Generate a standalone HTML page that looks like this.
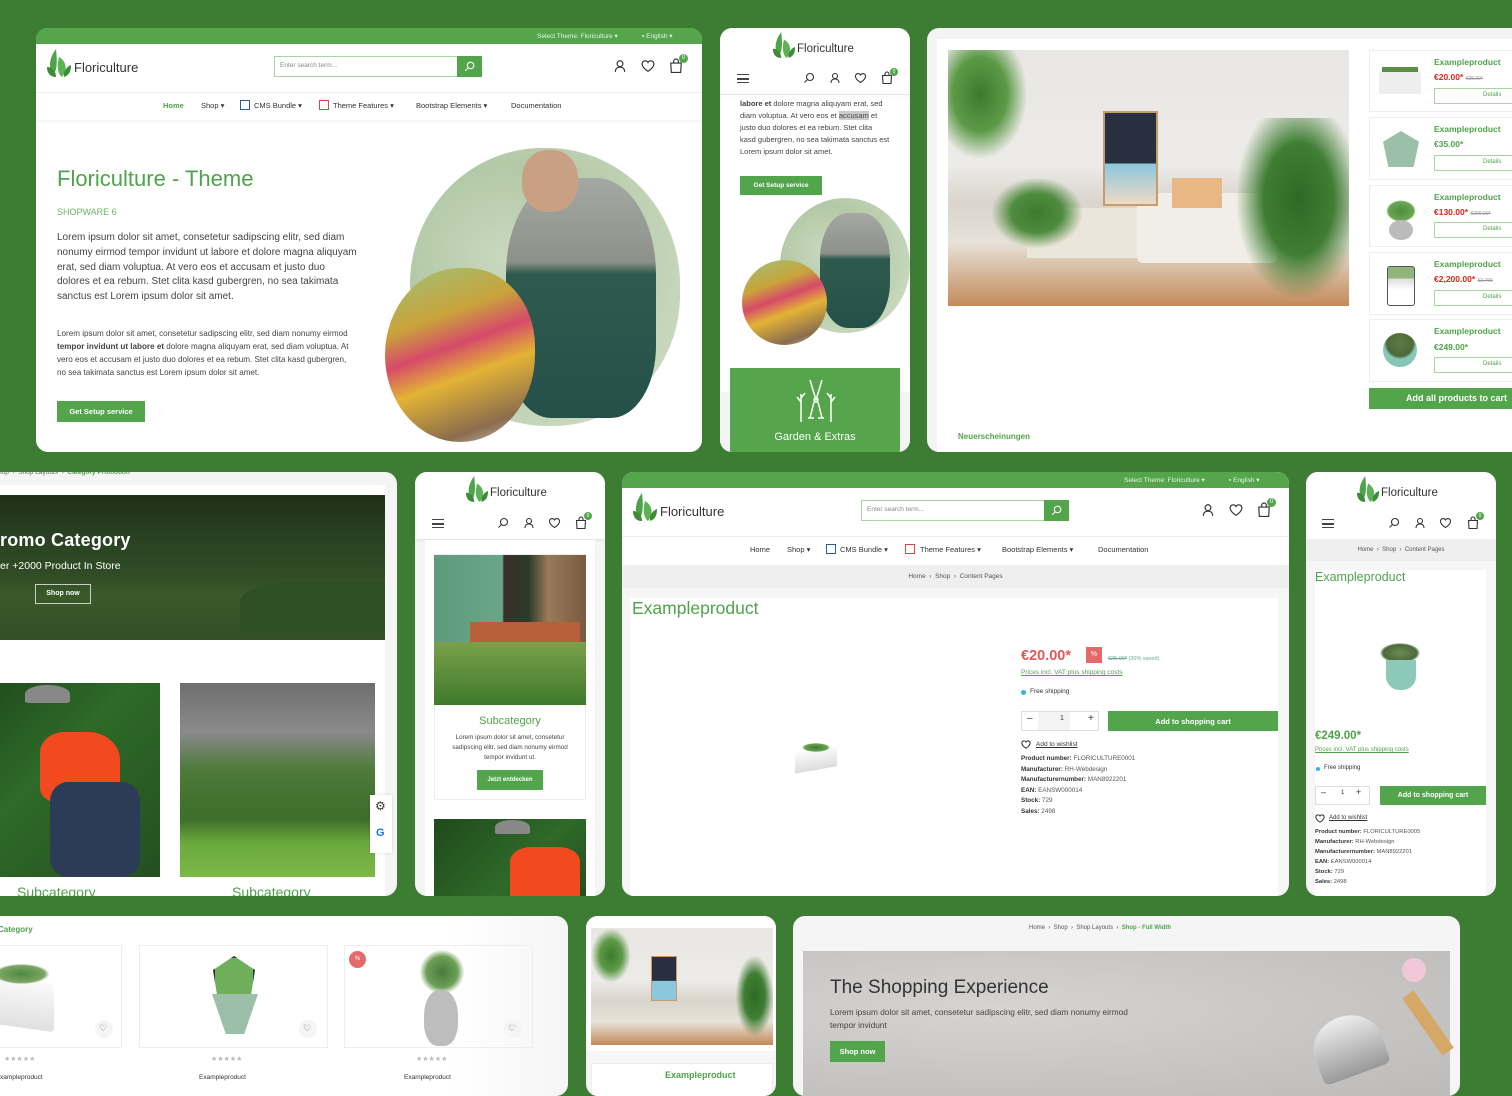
<!DOCTYPE html>
<html><head><meta charset="utf-8">
<style>
*{margin:0;padding:0;box-sizing:border-box}
body{width:1512px;height:1080px;overflow:hidden;background:#3c7d33;font-family:"Liberation Sans",sans-serif;color:#333;position:relative}
.p{position:absolute;background:#fff;border-radius:12px;overflow:hidden}
.a{position:absolute;white-space:nowrap}
.g{color:#4fa34a}
.btn{position:absolute;background:#52a54a;color:#fff;font-weight:bold;display:flex;align-items:center;justify-content:center;white-space:nowrap}
.ic{position:absolute}
.bc{position:absolute;background:#f2f2f2;left:0;right:0;text-align:center;color:#555}
.img{position:absolute}
</style></head><body>

<!-- ============ PANEL A ============ -->
<div class="p" style="left:36px;top:28px;width:666px;height:424px;">
  <div style="position:absolute;left:0;top:0;width:666px;height:16px;background:#55a54c"></div>
  <div class="a" style="left:501px;top:4px;font-size:6.5px;color:#e8f4e6">Select Theme: Floriculture ▾</div>
  <div class="a" style="left:606px;top:4px;font-size:6.5px;color:#e8f4e6">▪ English ▾</div>
  <svg class="ic" style="left:10px;top:21px" width="26" height="29" viewBox="0 0 26 29"><path d="M10 0 C4 8 2 16 6 26 C10 24 12 18 10 0Z" fill="#4fa34a"/><path d="M13 8 C20 12 22 20 16 28 C11 24 11 16 13 8Z" fill="#5cb356"/><path d="M1 18 C6 18 10 22 10 28 C4 28 1 24 1 18Z" fill="#3d8c37"/><path d="M25 16 C20 18 17 23 18 28 C24 26 25 21 25 16Z" fill="#3d8c37"/></svg>
  <div class="a" style="left:38px;top:32px;font-size:13px;color:#333">Floriculture</div>
  <div style="position:absolute;left:238px;top:28px;width:208px;height:21px;border:1px solid #a8d6a2;background:#fff"></div>
  <div class="a" style="left:244px;top:34px;font-size:6.5px;color:#888">Enter search term...</div>
  <div style="position:absolute;left:421px;top:28px;width:25px;height:21px;background:#52a54a"></div>
  <svg class="ic" style="left:427px;top:32px" width="13" height="13" viewBox="0 0 24 24" fill="none" stroke="#fff" stroke-width="2"><circle cx="14" cy="10" r="6"/><path d="M10 14 4 20"/></svg>
  <svg class="ic" style="left:577px;top:31px" width="14" height="14" viewBox="0 0 24 24" fill="none" stroke="#333" stroke-width="2"><circle cx="12" cy="8" r="5"/><path d="M4 22c0-5 3-8 8-8s8 3 8 8"/></svg>
  <svg class="ic" style="left:605px;top:31px" width="14" height="14" viewBox="0 0 24 24" fill="none" stroke="#333" stroke-width="2"><path d="M12 21s-8-5-9.5-10A5 5 0 0 1 12 6a5 5 0 0 1 9.5 5C20 16 12 21 12 21z"/></svg>
  <svg class="ic" style="left:633px;top:30px" width="14" height="16" viewBox="0 0 24 26" fill="none" stroke="#333" stroke-width="2"><path d="M3 8h18l-1 16H4z"/><path d="M8 8V5a4 4 0 0 1 8 0v3"/></svg>
  <div style="position:absolute;left:643px;top:26px;width:9px;height:9px;border-radius:50%;background:#52a54a;color:#fff;font-size:6px;text-align:center;line-height:9px">0</div>
  <div style="position:absolute;left:0;top:64px;width:666px;height:28px;border-top:1px solid #eee;box-shadow:0 2px 3px rgba(0,0,0,.05)"></div>
  <div class="a" style="left:127px;top:73px;font-size:7.5px;font-weight:bold;color:#4fa34a">Home</div>
  <div class="a" style="left:165px;top:73px;font-size:7.5px">Shop ▾</div>
  <div style="position:absolute;left:204px;top:72px;width:10px;height:10px;border:1.5px solid #2e5d9c"></div>
  <div class="a" style="left:218px;top:73px;font-size:7.5px">CMS Bundle ▾</div>
  <div style="position:absolute;left:283px;top:72px;width:10px;height:10px;border:1.5px solid #d94848"></div>
  <div class="a" style="left:297px;top:73px;font-size:7.5px">Theme Features ▾</div>
  <div class="a" style="left:380px;top:73px;font-size:7.5px">Bootstrap Elements ▾</div>
  <div class="a" style="left:475px;top:73px;font-size:7.5px">Documentation</div>
  <div class="a g" style="left:21px;top:138px;font-size:22px">Floriculture - Theme</div>
  <div class="a" style="left:21px;top:179px;font-size:9px;color:#6ab564">SHOPWARE 6</div>
  <div style="position:absolute;left:21px;top:203px;width:300px;font-size:10px;line-height:14.8px;color:#444">Lorem ipsum dolor sit amet, consetetur sadipscing elitr, sed diam nonumy eirmod tempor invidunt ut labore et dolore magna aliquyam erat, sed diam voluptua. At vero eos et accusam et justo duo dolores et ea rebum. Stet clita kasd gubergren, no sea takimata sanctus est Lorem ipsum dolor sit amet.</div>
  <div style="position:absolute;left:21px;top:300px;width:300px;font-size:8.1px;line-height:12.9px;color:#444">Lorem ipsum dolor sit amet, consetetur sadipscing elitr, sed diam nonumy eirmod <b>tempor invidunt ut labore et</b> dolore magna aliquyam erat, sed diam voluptua. At vero eos et accusam et justo duo dolores et ea rebum. Stet clita kasd gubergren, no sea takimata sanctus est Lorem ipsum dolor sit amet.</div>
  <div class="btn" style="left:21px;top:373px;width:88px;height:21px;font-size:7.5px">Get Setup service</div>
  <div style="position:absolute;left:374px;top:120px;width:270px;height:278px;border-radius:50% 50% 48% 52%;background:radial-gradient(ellipse at 35% 40%,#c9d8bf 0,#b3c9a6 40%,#d6e2ce 100%)"></div>
  <div style="position:absolute;left:470px;top:150px;width:150px;height:240px;border-radius:40% 40% 30% 30%;background:linear-gradient(180deg,#a5a8a2 0,#8d918a 35%,#2e5a4e 40%,#24504a 100%)"></div>
  <div style="position:absolute;left:486px;top:122px;width:56px;height:62px;border-radius:45%;background:#c9a083"></div>
  <div style="position:absolute;left:349px;top:240px;width:150px;height:174px;border-radius:50% 45% 50% 50%;background:linear-gradient(160deg,#9cc27a 0,#c9a33a 30%,#d64a6a 45%,#e3b334 60%,#8b6d4d 85%,#cfc8c0 100%)"></div>
</div>

<!-- ============ PANEL B ============ -->
<div class="p" style="left:720px;top:28px;width:190px;height:424px;">
  <svg class="ic" style="left:52px;top:4px" width="24" height="27" viewBox="0 0 26 29"><path d="M10 0 C4 8 2 16 6 26 C10 24 12 18 10 0Z" fill="#4fa34a"/><path d="M13 8 C20 12 22 20 16 28 C11 24 11 16 13 8Z" fill="#5cb356"/><path d="M1 18 C6 18 10 22 10 28 C4 28 1 24 1 18Z" fill="#3d8c37"/><path d="M25 16 C20 18 17 23 18 28 C24 26 25 21 25 16Z" fill="#3d8c37"/></svg>
  <div class="a" style="left:77px;top:15px;font-size:11.5px">Floriculture</div>
  <div style="position:absolute;left:17px;top:46px;width:12px;height:9px;border-top:1.5px solid #444;border-bottom:1.5px solid #444"></div><div style="position:absolute;left:17px;top:50px;width:12px;height:1.5px;background:#444"></div>
  <svg class="ic" style="left:83px;top:44px" width="12" height="12" viewBox="0 0 24 24" fill="none" stroke="#333" stroke-width="2.2"><circle cx="14" cy="10" r="7"/><path d="M9 15 3 21"/></svg>
  <svg class="ic" style="left:109px;top:44px" width="12" height="12" viewBox="0 0 24 24" fill="none" stroke="#333" stroke-width="2.2"><circle cx="12" cy="8" r="5"/><path d="M4 22c0-5 3-8 8-8s8 3 8 8"/></svg>
  <svg class="ic" style="left:134px;top:44px" width="13" height="12" viewBox="0 0 24 24" fill="none" stroke="#333" stroke-width="2.2"><path d="M12 21s-8-5-9.5-10A5 5 0 0 1 12 6a5 5 0 0 1 9.5 5C20 16 12 21 12 21z"/></svg>
  <svg class="ic" style="left:161px;top:43px" width="12" height="14" viewBox="0 0 24 26" fill="none" stroke="#333" stroke-width="2.2"><path d="M3 8h18l-1 16H4z"/><path d="M8 8V5a4 4 0 0 1 8 0v3"/></svg>
  <div style="position:absolute;left:170px;top:40px;width:8px;height:8px;border-radius:50%;background:#52a54a;color:#fff;font-size:5px;text-align:center;line-height:8px">0</div>
  <div style="position:absolute;left:0;top:66px;width:190px;height:1px;background:#e6e6e6;box-shadow:0 1px 3px rgba(0,0,0,.08)"></div>
  <div style="position:absolute;left:20px;top:70px;width:150px;font-size:7.5px;line-height:11.9px;color:#444"><b>labore et</b> dolore magna aliquyam erat, sed diam voluptua. At vero eos et <span style="background:#ccc">accusam</span> et justo duo dolores et ea rebum. Stet clita kasd gubergren, no sea takimata sanctus est Lorem ipsum dolor sit amet.</div>
  <div class="btn" style="left:20px;top:148px;width:82px;height:19px;font-size:6.5px">Get Setup service</div>
  <div style="position:absolute;left:60px;top:170px;width:130px;height:135px;border-radius:50%;background:radial-gradient(ellipse at 35% 40%,#c9d8bf 0,#b3c9a6 40%,#d6e2ce 100%)"></div>
  <div style="position:absolute;left:100px;top:185px;width:70px;height:115px;border-radius:40%;background:linear-gradient(180deg,#a5a8a2 0,#8d918a 35%,#2e5a4e 40%,#24504a 100%)"></div>
  <div style="position:absolute;left:22px;top:232px;width:85px;height:85px;border-radius:50%;background:linear-gradient(160deg,#9cc27a 0,#c9a33a 30%,#d64a6a 45%,#e3b334 60%,#8b6d4d 85%,#cfc8c0 100%)"></div>
  <div style="position:absolute;left:0;top:364px;width:190px;height:60px;background:#f4f4f4"></div>
  <div style="position:absolute;left:10px;top:340px;width:170px;height:84px;background:#54a54b"></div>
  <svg class="ic" style="left:76px;top:350px" width="40" height="46" viewBox="0 0 40 46" fill="none" stroke="#fff" stroke-width="1.5"><path d="M14 2 20 22 26 2"/><circle cx="20" cy="22" r="2"/><path d="M18 24 14 40M22 24 26 40M12 40h6M22 40h6"/><path d="M5 44V16M5 24l-4-5M5 20l4-5M35 44V16M35 24l4-5M35 20l-4-5"/></svg>
  <div class="a" style="left:0;width:190px;text-align:center;top:403px;font-size:11px;color:#fff">Garden &amp; Extras</div>
</div>

<!-- ============ PANEL C ============ -->
<div class="p" style="left:927px;top:28px;width:600px;height:424px;background:#f4f4f4">
  <div style="position:absolute;left:10px;top:11px;width:600px;height:413px;background:#fff"></div>
  <div class="img" style="left:21px;top:22px;width:401px;height:256px;background:linear-gradient(180deg,#e9e7e3 0,#ecebe8 45%,#d9d4cc 60%,#e7e2d9 75%,#c48a5a 100%)"></div>
  <div class="img" style="left:21px;top:22px;width:80px;height:110px;background:radial-gradient(ellipse at 40% 40%,#3d7a2c 0,#5d9a48 40%,transparent 70%)"></div>
  <div class="img" style="left:100px;top:180px;width:150px;height:50px;background:#ebe5da"></div>
  <div class="img" style="left:210px;top:165px;width:140px;height:70px;background:#f1eee8;border-radius:6px"></div>
  <div class="img" style="left:245px;top:150px;width:50px;height:30px;background:#e8b784"></div>
  <div class="img" style="left:176px;top:83px;width:55px;height:95px;background:linear-gradient(#283040 0,#283040 55%,#8bc7dd 56%,#f0d9c6 100%);border:2px solid #c79b6c"></div>
  <div class="img" style="left:310px;top:90px;width:112px;height:180px;background:radial-gradient(ellipse at 55% 45%,#2e6a25 0,#3f7e33 40%,transparent 72%)"></div>
  <div class="img" style="left:65px;top:150px;width:90px;height:70px;background:radial-gradient(ellipse,#3c7a30 0,#4f8c3f 40%,transparent 72%)"></div>
  <div class="a" style="left:31px;top:404px;font-size:8px;font-weight:bold;color:#52a54a">Neuerscheinungen</div>
  <div style="position:absolute;left:442px;top:22px;width:160px;height:62px;background:#fff;border:1px solid #eee"></div>
  <div style="position:absolute;left:442px;top:89px;width:160px;height:63px;background:#fff;border:1px solid #eee"></div>
  <div style="position:absolute;left:442px;top:157px;width:160px;height:62px;background:#fff;border:1px solid #eee"></div>
  <div style="position:absolute;left:442px;top:224px;width:160px;height:63px;background:#fff;border:1px solid #eee"></div>
  <div style="position:absolute;left:442px;top:291px;width:160px;height:63px;background:#fff;border:1px solid #eee"></div>
  <div class="img" style="left:452px;top:44px;width:42px;height:22px;background:#eee;box-shadow:0 -8px 0 -3px #5a8f45"></div>
  <div class="img" style="left:456px;top:103px;width:36px;height:36px;background:#9bbfa8;clip-path:polygon(50% 0,100% 30%,85% 100%,15% 100%,0 30%)"></div>
  <div class="img" style="left:459px;top:172px;width:30px;height:22px;background:radial-gradient(#4f8d3d,#6aa552 60%,transparent 70%)"></div><div class="img" style="left:462px;top:192px;width:24px;height:20px;border-radius:50%;background:#bbb"></div>
  <div class="img" style="left:460px;top:238px;width:28px;height:40px;border:1px solid #555;border-radius:3px;background:linear-gradient(#8fb57a 0,#8fb57a 30%,#ddd 31%,#fff 60%)"></div>
  <div class="img" style="left:456px;top:305px;width:34px;height:34px;border-radius:50%;background:radial-gradient(circle at 50% 30%,#5c7a45 0,#4e6a3b 45%,#8bc8b8 55%,#7cc1b0 100%)"></div>
  <div class="a" style="left:507px;top:29px;font-size:8.5px;font-weight:bold;color:#4fa34a">Exampleproduct</div>
  <div class="a" style="left:507px;top:44px;font-size:8.5px;font-weight:bold;color:#e2231a">€20.00* <span style="font-size:5px;color:#999;text-decoration:line-through;font-weight:normal">€25.00*</span></div>
  <div class="a" style="left:507px;top:96px;font-size:8.5px;font-weight:bold;color:#4fa34a">Exampleproduct</div>
  <div class="a" style="left:507px;top:111px;font-size:8.5px;font-weight:bold;color:#4fa34a">€35.00*</div>
  <div class="a" style="left:507px;top:164px;font-size:8.5px;font-weight:bold;color:#4fa34a">Exampleproduct</div>
  <div class="a" style="left:507px;top:179px;font-size:8.5px;font-weight:bold;color:#e2231a">€130.00* <span style="font-size:5px;color:#999;text-decoration:line-through;font-weight:normal">€200.00*</span></div>
  <div class="a" style="left:507px;top:231px;font-size:8.5px;font-weight:bold;color:#4fa34a">Exampleproduct</div>
  <div class="a" style="left:507px;top:246px;font-size:8.5px;font-weight:bold;color:#e2231a">€2,200.00* <span style="font-size:5px;color:#999;text-decoration:line-through;font-weight:normal">€2,799</span></div>
  <div class="a" style="left:507px;top:298px;font-size:8.5px;font-weight:bold;color:#4fa34a">Exampleproduct</div>
  <div class="a" style="left:507px;top:314px;font-size:8.5px;font-weight:bold;color:#4fa34a">€249.00*</div>
  <div style="position:absolute;left:507px;top:60px;width:95px;height:16px;border:1px solid #a8d6a2"></div><div class="a" style="left:556px;top:64px;font-size:6px;color:#4fa34a">Details</div>
  <div style="position:absolute;left:507px;top:127px;width:95px;height:16px;border:1px solid #a8d6a2"></div><div class="a" style="left:556px;top:131px;font-size:6px;color:#4fa34a">Details</div>
  <div style="position:absolute;left:507px;top:194px;width:95px;height:16px;border:1px solid #a8d6a2"></div><div class="a" style="left:556px;top:198px;font-size:6px;color:#4fa34a">Details</div>
  <div style="position:absolute;left:507px;top:262px;width:95px;height:16px;border:1px solid #a8d6a2"></div><div class="a" style="left:556px;top:266px;font-size:6px;color:#4fa34a">Details</div>
  <div style="position:absolute;left:507px;top:329px;width:95px;height:16px;border:1px solid #a8d6a2"></div><div class="a" style="left:556px;top:333px;font-size:6px;color:#4fa34a">Details</div>
  <div style="position:absolute;left:442px;top:360px;width:160px;height:21px;background:#52a54a"></div>
  <div class="a" style="left:479px;top:365px;font-size:9px;font-weight:bold;color:#fff">Add all products to cart</div>
</div>

<!-- ============ PANEL D ============ -->
<div class="p" style="left:-20px;top:472px;width:417px;height:424px;background:#f5f5f5">
  <div class="a" style="left:18px;top:-3px;font-size:6.5px;color:#666">hop &nbsp;›&nbsp; Shop Layouts &nbsp;›&nbsp; <b style="color:#4fa34a">Category Promotion</b></div>
  <div style="position:absolute;left:0;top:13px;width:405px;height:411px;background:#fff"></div>
  <div class="img" style="left:0;top:23px;width:405px;height:145px;background:linear-gradient(180deg,#1f2f18 0,#2b4424 35%,#304c25 55%,#3a5a2a 70%,#324f25 100%)"></div>
  <div class="img" style="left:260px;top:110px;width:145px;height:50px;background:#2f4f24;border-radius:40% 0 0 0"></div>
  <div class="a" style="left:20px;top:58px;font-size:18px;color:#fff;font-weight:bold;letter-spacing:.2px">romo Category</div>
  <div class="a" style="left:20px;top:88px;font-size:10.5px;color:#fff">er +2000 Product In Store</div>
  <div style="position:absolute;left:55px;top:112px;width:56px;height:20px;border:1px solid #ccc;color:#fff;font-size:7px;font-weight:bold;text-align:center;line-height:18px">Shop now</div>
  <div class="img" style="left:0;top:211px;width:180px;height:194px;background:linear-gradient(135deg,#1f4a1c 0,#2e6a28 40%,#244f20 100%)"></div>
  <div class="img" style="left:60px;top:260px;width:80px;height:70px;background:#f04a1e;border-radius:30% 40% 20% 20%"></div>
  <div class="img" style="left:45px;top:213px;width:45px;height:18px;background:#888;border-radius:50% 50% 10% 10%"></div>
  <div class="img" style="left:70px;top:310px;width:90px;height:95px;background:#2c3c56;border-radius:20%"></div>
  <div class="img" style="left:200px;top:211px;width:195px;height:194px;background:linear-gradient(180deg,#6e6e6e 0,#8a8a8a 25%,#4e7a3a 45%,#3d6e2a 70%,#6aa83d 82%,#7db848 100%)"></div>
  <div class="a g" style="left:37px;top:412px;font-size:14px">Subcategory</div>
  <div class="a g" style="left:252px;top:412px;font-size:14px">Subcategory</div>
  <div style="position:absolute;left:390px;top:323px;width:22px;height:58px;background:#fff;box-shadow:0 0 3px rgba(0,0,0,.15)"></div>
  <div class="a" style="left:395px;top:327px;font-size:12px;color:#333">⚙</div>
  <div class="a" style="left:396px;top:355px;font-size:11px;color:#1a73e8;font-weight:bold">G</div>
</div>

<!-- ============ PANEL E ============ -->
<div class="p" style="left:415px;top:472px;width:190px;height:424px;background:#f5f5f5">
  <div style="position:absolute;left:0;top:0;width:190px;height:67px;background:#fff;box-shadow:0 1px 3px rgba(0,0,0,.1)"></div>
  <svg class="ic" style="left:50px;top:4px" width="24" height="27" viewBox="0 0 26 29"><path d="M10 0 C4 8 2 16 6 26 C10 24 12 18 10 0Z" fill="#4fa34a"/><path d="M13 8 C20 12 22 20 16 28 C11 24 11 16 13 8Z" fill="#5cb356"/><path d="M1 18 C6 18 10 22 10 28 C4 28 1 24 1 18Z" fill="#3d8c37"/><path d="M25 16 C20 18 17 23 18 28 C24 26 25 21 25 16Z" fill="#3d8c37"/></svg>
  <div class="a" style="left:75px;top:15px;font-size:11.5px">Floriculture</div>
  <div style="position:absolute;left:17px;top:47px;width:12px;height:9px;border-top:1.5px solid #444;border-bottom:1.5px solid #444"></div><div style="position:absolute;left:17px;top:51px;width:12px;height:1.5px;background:#444"></div>
  <svg class="ic" style="left:82px;top:45px" width="12" height="12" viewBox="0 0 24 24" fill="none" stroke="#333" stroke-width="2.2"><circle cx="14" cy="10" r="7"/><path d="M9 15 3 21"/></svg>
  <svg class="ic" style="left:108px;top:45px" width="12" height="12" viewBox="0 0 24 24" fill="none" stroke="#333" stroke-width="2.2"><circle cx="12" cy="8" r="5"/><path d="M4 22c0-5 3-8 8-8s8 3 8 8"/></svg>
  <svg class="ic" style="left:133px;top:45px" width="13" height="12" viewBox="0 0 24 24" fill="none" stroke="#333" stroke-width="2.2"><path d="M12 21s-8-5-9.5-10A5 5 0 0 1 12 6a5 5 0 0 1 9.5 5C20 16 12 21 12 21z"/></svg>
  <svg class="ic" style="left:160px;top:44px" width="12" height="14" viewBox="0 0 24 26" fill="none" stroke="#333" stroke-width="2.2"><path d="M3 8h18l-1 16H4z"/><path d="M8 8V5a4 4 0 0 1 8 0v3"/></svg>
  <div style="position:absolute;left:169px;top:40px;width:8px;height:8px;border-radius:50%;background:#52a54a;color:#fff;font-size:5px;text-align:center;line-height:8px">0</div>
  <div style="position:absolute;left:10px;top:68px;width:170px;height:356px;background:#fff"></div>
  <div style="position:absolute;left:19px;top:82px;width:152px;height:246px;border:1px solid #eee"></div>
  <div class="img" style="left:19px;top:83px;width:152px;height:150px;background:linear-gradient(90deg,#5f9a7c 0,#6aa587 45%,#3a2f28 46%,#2a3a28 62%,#9a7a58 75%,#7a5a40 100%)"></div>
  <div class="img" style="left:19px;top:170px;width:152px;height:63px;background:linear-gradient(180deg,#7aa04a,#3f7a2c)"></div>
  <div class="img" style="left:55px;top:150px;width:110px;height:20px;background:#b8603a"></div>
  <div class="a g" style="left:0;width:190px;text-align:center;top:243px;font-size:11px">Subcategory</div>
  <div style="position:absolute;left:28px;top:261px;width:134px;text-align:center;font-size:6.3px;line-height:10px;color:#444">Lorem ipsum dolor sit amet, consetetur sadipscing elitr, sed diam nonumy eirmod tempor invidunt ut.</div>
  <div class="btn" style="left:62px;top:298px;width:66px;height:20px;font-size:6px">Jetzt entdecken</div>
  <div class="img" style="left:19px;top:347px;width:152px;height:77px;background:linear-gradient(135deg,#1f4a1c 0,#2e6a28 60%,#244f20 100%)"></div>
  <div class="img" style="left:95px;top:375px;width:70px;height:49px;background:#f04a1e;border-radius:30% 30% 0 0"></div>
  <div class="img" style="left:80px;top:348px;width:35px;height:14px;background:#888;border-radius:50% 50% 10% 10%"></div>
</div>

<!-- ============ PANEL F ============ -->
<div class="p" style="left:622px;top:472px;width:667px;height:424px;background:#f6f6f6">
  <div style="position:absolute;left:0;top:0;width:667px;height:93px;background:#fff"></div>
  <div style="position:absolute;left:0;top:0;width:667px;height:16px;background:#55a54c"></div>
  <div class="a" style="left:502px;top:4px;font-size:6.5px;color:#e8f4e6">Select Theme: Floriculture ▾</div>
  <div class="a" style="left:607px;top:4px;font-size:6.5px;color:#e8f4e6">▪ English ▾</div>
  <svg class="ic" style="left:10px;top:21px" width="26" height="29" viewBox="0 0 26 29"><path d="M10 0 C4 8 2 16 6 26 C10 24 12 18 10 0Z" fill="#4fa34a"/><path d="M13 8 C20 12 22 20 16 28 C11 24 11 16 13 8Z" fill="#5cb356"/><path d="M1 18 C6 18 10 22 10 28 C4 28 1 24 1 18Z" fill="#3d8c37"/><path d="M25 16 C20 18 17 23 18 28 C24 26 25 21 25 16Z" fill="#3d8c37"/></svg>
  <div class="a" style="left:38px;top:32px;font-size:13px">Floriculture</div>
  <div style="position:absolute;left:239px;top:28px;width:208px;height:21px;border:1px solid #a8d6a2"></div>
  <div class="a" style="left:245px;top:34px;font-size:6.5px;color:#888">Enter search term...</div>
  <div style="position:absolute;left:422px;top:28px;width:25px;height:21px;background:#52a54a"></div>
  <svg class="ic" style="left:428px;top:32px" width="13" height="13" viewBox="0 0 24 24" fill="none" stroke="#fff" stroke-width="2"><circle cx="14" cy="10" r="6"/><path d="M10 14 4 20"/></svg>
  <svg class="ic" style="left:579px;top:31px" width="14" height="14" viewBox="0 0 24 24" fill="none" stroke="#333" stroke-width="2"><circle cx="12" cy="8" r="5"/><path d="M4 22c0-5 3-8 8-8s8 3 8 8"/></svg>
  <svg class="ic" style="left:607px;top:31px" width="14" height="14" viewBox="0 0 24 24" fill="none" stroke="#333" stroke-width="2"><path d="M12 21s-8-5-9.5-10A5 5 0 0 1 12 6a5 5 0 0 1 9.5 5C20 16 12 21 12 21z"/></svg>
  <svg class="ic" style="left:635px;top:30px" width="14" height="16" viewBox="0 0 24 26" fill="none" stroke="#333" stroke-width="2"><path d="M3 8h18l-1 16H4z"/><path d="M8 8V5a4 4 0 0 1 8 0v3"/></svg>
  <div style="position:absolute;left:645px;top:26px;width:9px;height:9px;border-radius:50%;background:#52a54a;color:#fff;font-size:6px;text-align:center;line-height:9px">0</div>
  <div style="position:absolute;left:0;top:64px;width:667px;height:1px;background:#eee"></div>
  <div class="a" style="left:128px;top:73px;font-size:7.5px">Home</div>
  <div class="a" style="left:165px;top:73px;font-size:7.5px">Shop ▾</div>
  <div style="position:absolute;left:204px;top:72px;width:10px;height:10px;border:1.5px solid #2e5d9c"></div>
  <div class="a" style="left:218px;top:73px;font-size:7.5px">CMS Bundle ▾</div>
  <div style="position:absolute;left:283px;top:72px;width:10px;height:10px;border:1.5px solid #d94848"></div>
  <div class="a" style="left:298px;top:73px;font-size:7.5px">Theme Features ▾</div>
  <div class="a" style="left:380px;top:73px;font-size:7.5px">Bootstrap Elements ▾</div>
  <div class="a" style="left:476px;top:73px;font-size:7.5px">Documentation</div>
  <div class="bc" style="top:93px;height:23px;background:#efefef;font-size:6.5px;line-height:23px">Home &nbsp;›&nbsp; Shop &nbsp;›&nbsp; Content Pages</div>
  <div style="position:absolute;left:8px;top:126px;width:648px;height:298px;background:#fff"></div>
  <div class="a g" style="left:10px;top:126px;font-size:17.5px">Exampleproduct</div>
  <div class="img" style="left:173px;top:278px;width:42px;height:20px;background:linear-gradient(#fafafa,#ddd);transform:skewY(-10deg)"></div>
  <div class="img" style="left:180px;top:271px;width:28px;height:9px;background:radial-gradient(#3e7a35,#6aa552 60%,transparent 70%)"></div>
  <div class="a" style="left:399px;top:176px;font-size:14.5px;font-weight:bold;color:#e05a5a">€20.00*</div>
  <div style="position:absolute;left:464px;top:175px;width:16px;height:16px;background:#e26a6a;color:#fff;font-size:7px;text-align:center;line-height:16px">%</div>
  <div class="a" style="left:486px;top:184px;font-size:5.5px;color:#6a9"><s>€25.00*</s> (20% saved)</div>
  <div class="a" style="left:399px;top:197px;font-size:6.5px;color:#4fa34a;text-decoration:underline">Prices incl. VAT plus shipping costs</div>
  <div style="position:absolute;left:399px;top:218px;width:5px;height:5px;border-radius:50%;background:#35b5d6"></div>
  <div class="a" style="left:408px;top:216px;font-size:6.5px">Free shipping</div>
  <div style="position:absolute;left:399px;top:239px;width:78px;height:20px;border:1px solid #ddd;background:#fff"></div>
  <div style="position:absolute;left:416px;top:240px;width:32px;height:18px;background:#f4f4f4"></div>
  <div class="a" style="left:405px;top:241px;font-size:10px">–</div>
  <div class="a" style="left:438px;top:243px;font-size:7px">1</div>
  <div class="a" style="left:466px;top:241px;font-size:10px">+</div>
  <div class="btn" style="left:486px;top:239px;width:170px;height:20px;font-size:7.5px">Add to shopping cart</div>
  <svg class="ic" style="left:399px;top:268px" width="10" height="9" viewBox="0 0 24 22" fill="none" stroke="#333" stroke-width="2.5"><path d="M12 20s-8-5-9.5-10A5 5 0 0 1 12 5a5 5 0 0 1 9.5 5C20 15 12 20 12 20z"/></svg>
  <div class="a" style="left:414px;top:269px;font-size:6.5px;text-decoration:underline">Add to wishlist</div>
  <div style="position:absolute;left:399px;top:282px;font-size:6.3px;line-height:10.6px;color:#555"><b style="color:#333">Product number:</b> FLORICULTURE0001<br><b style="color:#333">Manufacturer:</b> RH-Webdesign<br><b style="color:#333">Manufacturernumber:</b> MAN8922201<br><b style="color:#333">EAN:</b> EANSW000014<br><b style="color:#333">Stock:</b> 729<br><b style="color:#333">Sales:</b> 2498</div>
</div>

<!-- ============ PANEL G ============ -->
<div class="p" style="left:1306px;top:472px;width:190px;height:424px;background:#f6f6f6">
  <div style="position:absolute;left:0;top:0;width:190px;height:67px;background:#fff"></div>
  <svg class="ic" style="left:50px;top:4px" width="24" height="27" viewBox="0 0 26 29"><path d="M10 0 C4 8 2 16 6 26 C10 24 12 18 10 0Z" fill="#4fa34a"/><path d="M13 8 C20 12 22 20 16 28 C11 24 11 16 13 8Z" fill="#5cb356"/><path d="M1 18 C6 18 10 22 10 28 C4 28 1 24 1 18Z" fill="#3d8c37"/><path d="M25 16 C20 18 17 23 18 28 C24 26 25 21 25 16Z" fill="#3d8c37"/></svg>
  <div class="a" style="left:75px;top:15px;font-size:11.5px">Floriculture</div>
  <div style="position:absolute;left:16px;top:47px;width:12px;height:9px;border-top:1.5px solid #444;border-bottom:1.5px solid #444"></div><div style="position:absolute;left:16px;top:51px;width:12px;height:1.5px;background:#444"></div>
  <svg class="ic" style="left:82px;top:45px" width="12" height="12" viewBox="0 0 24 24" fill="none" stroke="#333" stroke-width="2.2"><circle cx="14" cy="10" r="7"/><path d="M9 15 3 21"/></svg>
  <svg class="ic" style="left:108px;top:45px" width="12" height="12" viewBox="0 0 24 24" fill="none" stroke="#333" stroke-width="2.2"><circle cx="12" cy="8" r="5"/><path d="M4 22c0-5 3-8 8-8s8 3 8 8"/></svg>
  <svg class="ic" style="left:133px;top:45px" width="13" height="12" viewBox="0 0 24 24" fill="none" stroke="#333" stroke-width="2.2"><path d="M12 21s-8-5-9.5-10A5 5 0 0 1 12 6a5 5 0 0 1 9.5 5C20 16 12 21 12 21z"/></svg>
  <svg class="ic" style="left:161px;top:44px" width="12" height="14" viewBox="0 0 24 26" fill="none" stroke="#333" stroke-width="2.2"><path d="M3 8h18l-1 16H4z"/><path d="M8 8V5a4 4 0 0 1 8 0v3"/></svg>
  <div style="position:absolute;left:170px;top:40px;width:8px;height:8px;border-radius:50%;background:#52a54a;color:#fff;font-size:5px;text-align:center;line-height:8px">0</div>
  <div class="bc" style="top:67px;height:22px;background:#efefef;font-size:6px;line-height:22px">Home &nbsp;›&nbsp; Shop &nbsp;›&nbsp; Content Pages</div>
  <div style="position:absolute;left:9px;top:98px;width:171px;height:326px;background:#fff"></div>
  <div class="a g" style="left:9px;top:98px;font-size:12.5px">Exampleproduct</div>
  <div class="img" style="left:74px;top:171px;width:40px;height:20px;border-radius:50%;background:radial-gradient(#6a8a52,#4e6a3b 60%,transparent 72%)"></div>
  <div class="img" style="left:80px;top:188px;width:30px;height:30px;border-radius:0 0 45% 45%;background:#8cc9b8"></div>
  <div class="a" style="left:9px;top:258px;font-size:11.5px;font-weight:bold;color:#4fa34a">€249.00*</div>
  <div class="a" style="left:9px;top:275px;font-size:6px;color:#4fa34a;text-decoration:underline">Prices incl. VAT plus shipping costs</div>
  <div style="position:absolute;left:10px;top:295px;width:4px;height:4px;border-radius:50%;background:#35b5d6"></div>
  <div class="a" style="left:18px;top:293px;font-size:6px">Free shipping</div>
  <div style="position:absolute;left:9px;top:314px;width:55px;height:19px;border:1px solid #ddd"></div>
  <div class="a" style="left:15px;top:315px;font-size:9px">–</div><div class="a" style="left:35px;top:318px;font-size:6px">1</div><div class="a" style="left:50px;top:315px;font-size:9px">+</div>
  <div class="btn" style="left:74px;top:314px;width:106px;height:19px;font-size:7px">Add to shopping cart</div>
  <svg class="ic" style="left:9px;top:342px" width="10" height="9" viewBox="0 0 24 22" fill="none" stroke="#333" stroke-width="2.5"><path d="M12 20s-8-5-9.5-10A5 5 0 0 1 12 5a5 5 0 0 1 9.5 5C20 15 12 20 12 20z"/></svg>
  <div class="a" style="left:23px;top:343px;font-size:6px;text-decoration:underline">Add to wishlist</div>
  <div style="position:absolute;left:9px;top:355px;font-size:5.8px;line-height:10px;color:#555"><b style="color:#333">Product number:</b> FLORICULTURE0005<br><b style="color:#333">Manufacturer:</b> RH-Webdesign<br><b style="color:#333">Manufacturernumber:</b> MAN8922201<br><b style="color:#333">EAN:</b> EANSW000014<br><b style="color:#333">Stock:</b> 729<br><b style="color:#333">Sales:</b> 2498</div>
</div>

<!-- ============ PANEL H ============ -->
<div class="p" style="left:-20px;top:916px;width:588px;height:180px;background:linear-gradient(90deg,#fff 0,#fff 80%,#f5f5f5 100%)">
  <div class="a" style="left:18px;top:9px;font-size:8px;font-weight:bold;color:#4fa34a">Category</div>
  <div style="position:absolute;left:10px;top:29px;width:132px;height:103px;border:1px solid #eee"></div>
  <div style="position:absolute;left:159px;top:29px;width:189px;height:103px;border:1px solid #eee"></div>
  <div style="position:absolute;left:364px;top:29px;width:189px;height:103px;border:1px solid #eee"></div>
  <div class="img" style="left:14px;top:64px;width:60px;height:48px;background:linear-gradient(#fafafa,#e0e0e0);border-radius:4px;transform:skewY(8deg)"></div>
  <div class="img" style="left:14px;top:48px;width:55px;height:20px;background:radial-gradient(ellipse,#4e8a3f,#7ba565 60%,transparent 72%)"></div>
  <div class="img" style="left:233px;top:40px;width:42px;height:40px;border:2px solid #333;clip-path:polygon(50% 0,100% 35%,90% 100%,10% 100%,0 35%);background:#6fae5a"></div>
  <div class="img" style="left:232px;top:78px;width:46px;height:40px;background:#9bbfa8;clip-path:polygon(0 0,100% 0,70% 100%,30% 100%)"></div>
  <div class="img" style="left:440px;top:34px;width:44px;height:44px;background:radial-gradient(ellipse,#497c3b,#6d9f57 50%,transparent 72%)"></div>
  <div class="img" style="left:444px;top:74px;width:34px;height:56px;border-radius:45% 45% 40% 40%;background:#bdbdbd"></div>
  <div style="position:absolute;left:369px;top:35px;width:17px;height:17px;border-radius:50%;background:#e26a6a;color:#fff;font-size:6px;text-align:center;line-height:17px">%</div>
  <div style="position:absolute;left:115px;top:104px;width:18px;height:18px;border-radius:50%;background:#f5f5f5"></div><div class="a" style="left:119px;top:107px;font-size:9px;color:#555">♡</div>
  <div style="position:absolute;left:319px;top:104px;width:18px;height:18px;border-radius:50%;background:#f5f5f5"></div><div class="a" style="left:323px;top:107px;font-size:9px;color:#555">♡</div>
  <div style="position:absolute;left:524px;top:104px;width:18px;height:18px;border-radius:50%;background:#f5f5f5"></div><div class="a" style="left:528px;top:107px;font-size:9px;color:#555">♡</div>
  <div class="a" style="left:24px;top:139px;font-size:7px;color:#bbb">★★★★★</div>
  <div class="a" style="left:231px;top:139px;font-size:7px;color:#bbb">★★★★★</div>
  <div class="a" style="left:436px;top:139px;font-size:7px;color:#bbb">★★★★★</div>
  <div class="a" style="left:20px;top:158px;font-size:6.5px">xampleproduct</div>
  <div class="a" style="left:219px;top:158px;font-size:6.5px">Exampleproduct</div>
  <div class="a" style="left:424px;top:158px;font-size:6.5px">Exampleproduct</div>
</div>

<!-- ============ PANEL I ============ -->
<div class="p" style="left:586px;top:916px;width:190px;height:180px;background:#f6f6f6">
  <div style="position:absolute;left:0;top:0;width:190px;height:135px;background:#fff"></div>
  <div class="img" style="left:5px;top:12px;width:182px;height:117px;background:linear-gradient(180deg,#e9e7e3 0,#ecebe8 45%,#d9d4cc 62%,#e7e2d9 80%,#c48a5a 100%)"></div>
  <div class="img" style="left:5px;top:12px;width:40px;height:55px;background:radial-gradient(ellipse,#3d7a2c,#5d9a48 40%,transparent 70%)"></div>
  <div class="img" style="left:150px;top:40px;width:37px;height:80px;background:radial-gradient(ellipse,#2e6a25,#3f7e33 40%,transparent 72%)"></div>
  <div class="img" style="left:65px;top:40px;width:26px;height:45px;background:linear-gradient(#283040 55%,#8bc7dd 56%);border:1px solid #c79b6c"></div>
  <div style="position:absolute;left:5px;top:147px;width:182px;height:40px;background:#fff;border:1px solid #eee"></div>
  <div class="a" style="left:79px;top:154px;font-size:9px;font-weight:bold;color:#4fa34a">Exampleproduct</div>
</div>

<!-- ============ PANEL J ============ -->
<div class="p" style="left:793px;top:916px;width:667px;height:180px;background:#f5f5f5">
  <div class="a" style="left:236px;top:9px;font-size:6px;color:#555">Home &nbsp;›&nbsp; Shop &nbsp;›&nbsp; Shop Layouts &nbsp;›&nbsp; <b style="color:#4fa34a">Shop - Full Width</b></div>
  <div class="img" style="left:10px;top:35px;width:647px;height:145px;background:radial-gradient(ellipse at 30% 40%,#d6d4d2 0,#c9c7c5 50%,#bdbbb9 100%)"></div>
  <div class="img" style="left:600px;top:100px;width:70px;height:14px;background:#d5a868;transform:rotate(55deg)"></div>
  <div class="img" style="left:520px;top:100px;width:70px;height:60px;border-radius:50% 50% 10% 10%;background:linear-gradient(#eee,#999);transform:rotate(-20deg)"></div>
  <div class="img" style="left:609px;top:42px;width:24px;height:24px;border-radius:50%;background:#f0c8d8"></div>
  <div class="a" style="left:37px;top:61px;font-size:19px;color:#333">The Shopping Experience</div>
  <div style="position:absolute;left:37px;top:90px;width:300px;font-size:8.3px;line-height:13px;color:#444">Lorem ipsum dolor sit amet, consetetur sadipscing elitr, sed diam nonumy eirmod tempor invidunt</div>
  <div class="btn" style="left:37px;top:125px;width:55px;height:21px;font-size:7.5px">Shop now</div>
</div>

</body></html>
